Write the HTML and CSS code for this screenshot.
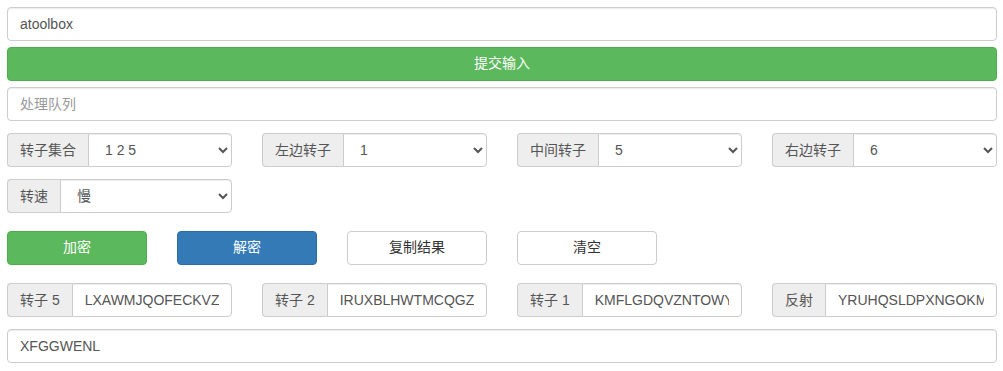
FILE: index.html
```html
<!DOCTYPE html>
<html lang="zh-CN">
<head>
  <meta charset="UTF-8">
  <meta name="viewport" content="width=device-width, initial-scale=1.0">
  <title>恩尼格玛机</title>
  <link rel="stylesheet" href="styles.css">
</head>
<body>
  <div class="wrap">
    <input class="form-control" type="text" value="atoolbox">
    <button class="btn btn-success btn-block">提交输入</button>
    <input class="form-control" type="text" placeholder="处理队列">

    <div class="grid">
      <div class="input-group">
        <span class="addon">转子集合</span>
        <select class="form-control">
          <option>1 2 5</option>
        </select>
      </div>
      <div class="input-group">
        <span class="addon">左边转子</span>
        <select class="form-control">
          <option>1</option>
        </select>
      </div>
      <div class="input-group">
        <span class="addon">中间转子</span>
        <select class="form-control">
          <option>5</option>
        </select>
      </div>
      <div class="input-group">
        <span class="addon">右边转子</span>
        <select class="form-control">
          <option>6</option>
        </select>
      </div>
      <div class="input-group">
        <span class="addon">转速</span>
        <select class="form-control">
          <option>慢</option>
        </select>
      </div>
    </div>

    <div class="actions">
      <button class="btn btn-success">加密</button>
      <button class="btn btn-primary">解密</button>
      <button class="btn btn-default">复制结果</button>
      <button class="btn btn-default">清空</button>
    </div>

    <div class="grid">
      <div class="input-group">
        <span class="addon">转子 5</span>
        <input class="form-control" type="text" value="LXAWMJQOFECKVZDRUYBGIPTNHS">
      </div>
      <div class="input-group">
        <span class="addon">转子 2</span>
        <input class="form-control" type="text" value="IRUXBLHWTMCQGZNPYFVOEASDKJ">
      </div>
      <div class="input-group">
        <span class="addon">转子 1</span>
        <input class="form-control" type="text" value="KMFLGDQVZNTOWYHXUSPAIBRCJE">
      </div>
      <div class="input-group">
        <span class="addon">反射</span>
        <input class="form-control" type="text" value="YRUHQSLDPXNGOKMIEBFZCWVJAT">
      </div>
    </div>

    <input class="form-control" type="text" value="XFGGWENL">
  </div>
</body>
</html>
```

FILE: styles.css
```css
* {
  box-sizing: border-box;
}
body {
  margin: 0;
  padding: 7px 6px 7px 7px;
  font-family: 'Liberation Sans', Arial, 'Noto Sans CJK SC', sans-serif;
  font-size: 14px;
  line-height: 1.42857;
  color: #333;
  background: #fff;
}
.wrap {
  display: flex;
  flex-direction: column;
}
.form-control {
  display: block;
  width: 100%;
  height: 34px;
  padding: 6px 12px;
  font-family: inherit;
  font-size: 14px;
  line-height: 1.42857;
  color: #555;
  background-color: #fff;
  border: 1px solid #ccc;
  border-radius: 4px;
  box-shadow: inset 0 1px 1px rgba(0,0,0,0.075);
  outline: none;
}
.form-control::placeholder {
  color: #999;
}
.btn {
  display: inline-block;
  height: 34px;
  padding: 6px 12px;
  font-family: inherit;
  font-size: 14px;
  line-height: 1.42857;
  text-align: center;
  border: 1px solid transparent;
  border-radius: 4px;
  cursor: pointer;
}
.btn-block {
  width: 100%;
  margin: 6px 0;
}
.btn-success {
  color: #fff;
  background-color: #5cb85c;
  border-color: #4cae4c;
}
.btn-primary {
  color: #fff;
  background-color: #337ab7;
  border-color: #2e6da4;
}
.btn-default {
  color: #333;
  background-color: #fff;
  border-color: #ccc;
}
.grid {
  display: grid;
  grid-template-columns: repeat(4, 225px);
  column-gap: 30px;
  row-gap: 12px;
  margin-top: 12px;
}
.input-group {
  display: flex;
  height: 34px;
}
.addon {
  flex: none;
  padding: 6px 12px;
  font-size: 14px;
  line-height: 20px;
  color: #555;
  text-align: center;
  white-space: nowrap;
  background-color: #eee;
  border: 1px solid #ccc;
  border-right: 0;
  border-radius: 4px 0 0 4px;
}
.input-group .form-control {
  flex: 1;
  min-width: 0;
  border-radius: 0 4px 4px 0;
}
select.form-control {
  padding: 6px 8px 6px 12px;
}
.actions {
  display: flex;
  gap: 30px;
  margin: 18px 0;
}
.actions .btn {
  width: 140px;
}
.actions + .grid {
  margin-top: 0;
}
.wrap > .form-control:last-child {
  margin-top: 12px;
}
```
